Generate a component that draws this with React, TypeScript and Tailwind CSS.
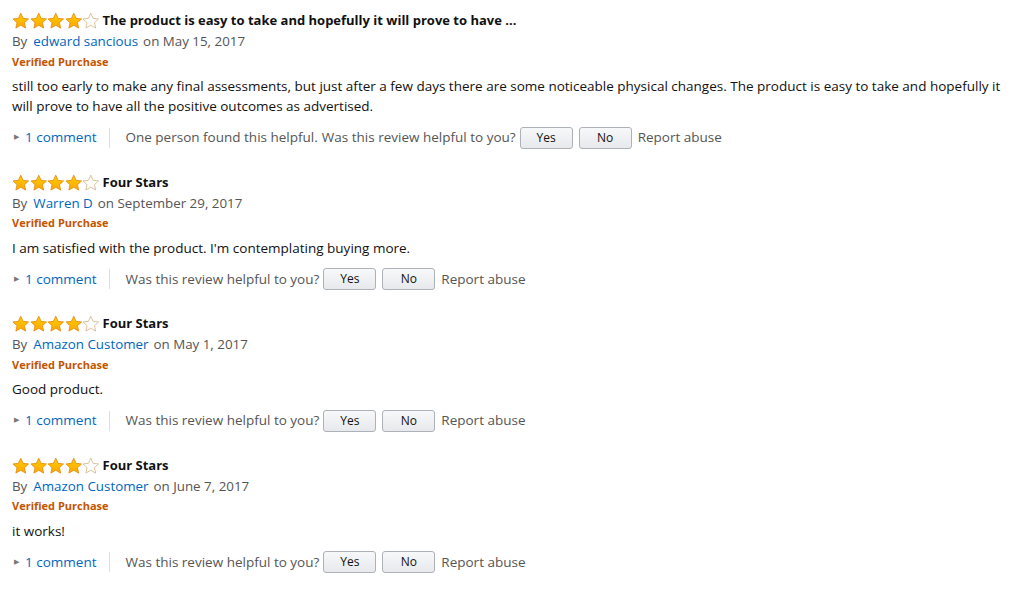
import React from 'react';

interface Review {
  title: string;
  author: string;
  date: string;
  body: string;
  helpful?: string;
}

const reviews: Review[] = [
  {
    title: 'The product is easy to take and hopefully it will prove to have ...',
    author: 'edward sancious',
    date: 'May 15, 2017',
    body: 'still too early to make any final assessments, but just after a few days there are some noticeable physical changes. The product is easy to take and hopefully it will prove to have all the positive outcomes as advertised.',
    helpful: 'One person found this helpful.',
  },
  {
    title: 'Four Stars',
    author: 'Warren D',
    date: 'September 29, 2017',
    body: "I am satisfied with the product. I'm contemplating buying more.",
  },
  {
    title: 'Four Stars',
    author: 'Amazon Customer',
    date: 'May 1, 2017',
    body: 'Good product.',
  },
  {
    title: 'Four Stars',
    author: 'Amazon Customer',
    date: 'June 7, 2017',
    body: 'it works!',
  },
];

const STAR = '9,1 11.4,6.3 17,6.9 12.8,10.7 14,16.3 9,13.4 4,16.3 5.2,10.7 1,6.9 6.6,6.3';

const Star = ({ filled }: { filled: boolean }) => (
  <svg width="17.5" height="17" viewBox="0 0 18 17">
    <defs>
      <linearGradient id="sg" x1="0" y1="0" x2="0" y2="1">
        <stop offset="0" stopColor="#ffce00" />
        <stop offset="1" stopColor="#ffa700" />
      </linearGradient>
    </defs>
    {filled ? (
      <polygon points={STAR} fill="url(#sg)" stroke="#e38d13" strokeWidth="0.9" strokeLinejoin="round" />
    ) : (
      <polygon points={STAR} fill="#fff" stroke="#d6b98f" strokeWidth="0.9" strokeLinejoin="round" />
    )}
  </svg>
);

const Btn = ({ label }: { label: string }) => (
  <button className="h-[22px] w-[53px] rounded-[3px] border border-[#adb1b8] bg-gradient-to-b from-[#f7f8fa] to-[#e7e9ec] text-[12px] text-[#111] leading-none">
    {label}
  </button>
);

const ReviewItem = ({ review }: { review: Review }) => (
  <div className="mb-[23px]">
    <div className="flex items-center h-[20px]">
      <div className="flex items-center -mt-[1px]">
        {[0, 1, 2, 3, 4].map((i) => (
          <Star key={i} filled={i < 4} />
        ))}
      </div>
      <span className="ml-[3px] font-bold text-[13px] text-[#111]">{review.title}</span>
    </div>
    <div className="h-[21px] flex items-center text-[13.35px] text-[#555]">
      By<span className="ml-[6px] mr-[5px] text-[#0066c0]">{review.author}</span>on {review.date}
    </div>
    <div className="h-[20px] flex items-center text-[11px] font-bold text-[#c45500]">Verified Purchase</div>
    <p className="mt-[4px] text-[13.5px] leading-[20px] text-[#111]">{review.body}</p>
    <div className="mt-[9.5px] flex items-center h-[24px] text-[13.5px] text-[#555]">
      <span className="ml-[2px] text-[7px] text-[#777]">&#9654;</span>
      <span className="ml-[6px] text-[#0066c0]">1 comment</span>
      <span className="ml-[13px] mr-[15px] h-[20px] w-px bg-[#ddd]" />
      {review.helpful && <span className="mr-[4px]">{review.helpful}</span>}
      <span>Was this review helpful to you?</span>
      <div className="ml-[4px] flex gap-[6px]">
        <Btn label="Yes" />
        <Btn label="No" />
      </div>
      <span className="ml-[6px]">Report abuse</span>
    </div>
  </div>
);

export default function App() {
  return (
    <div className="w-[1024px] h-[592px] bg-white overflow-hidden pl-[12px] pr-[12px] pt-[11px]" style={{ fontFamily: '"Open Sans", Arial, sans-serif' }}>
      {reviews.map((r, i) => (
        <ReviewItem key={i} review={r} />
      ))}
    </div>
  );
}
